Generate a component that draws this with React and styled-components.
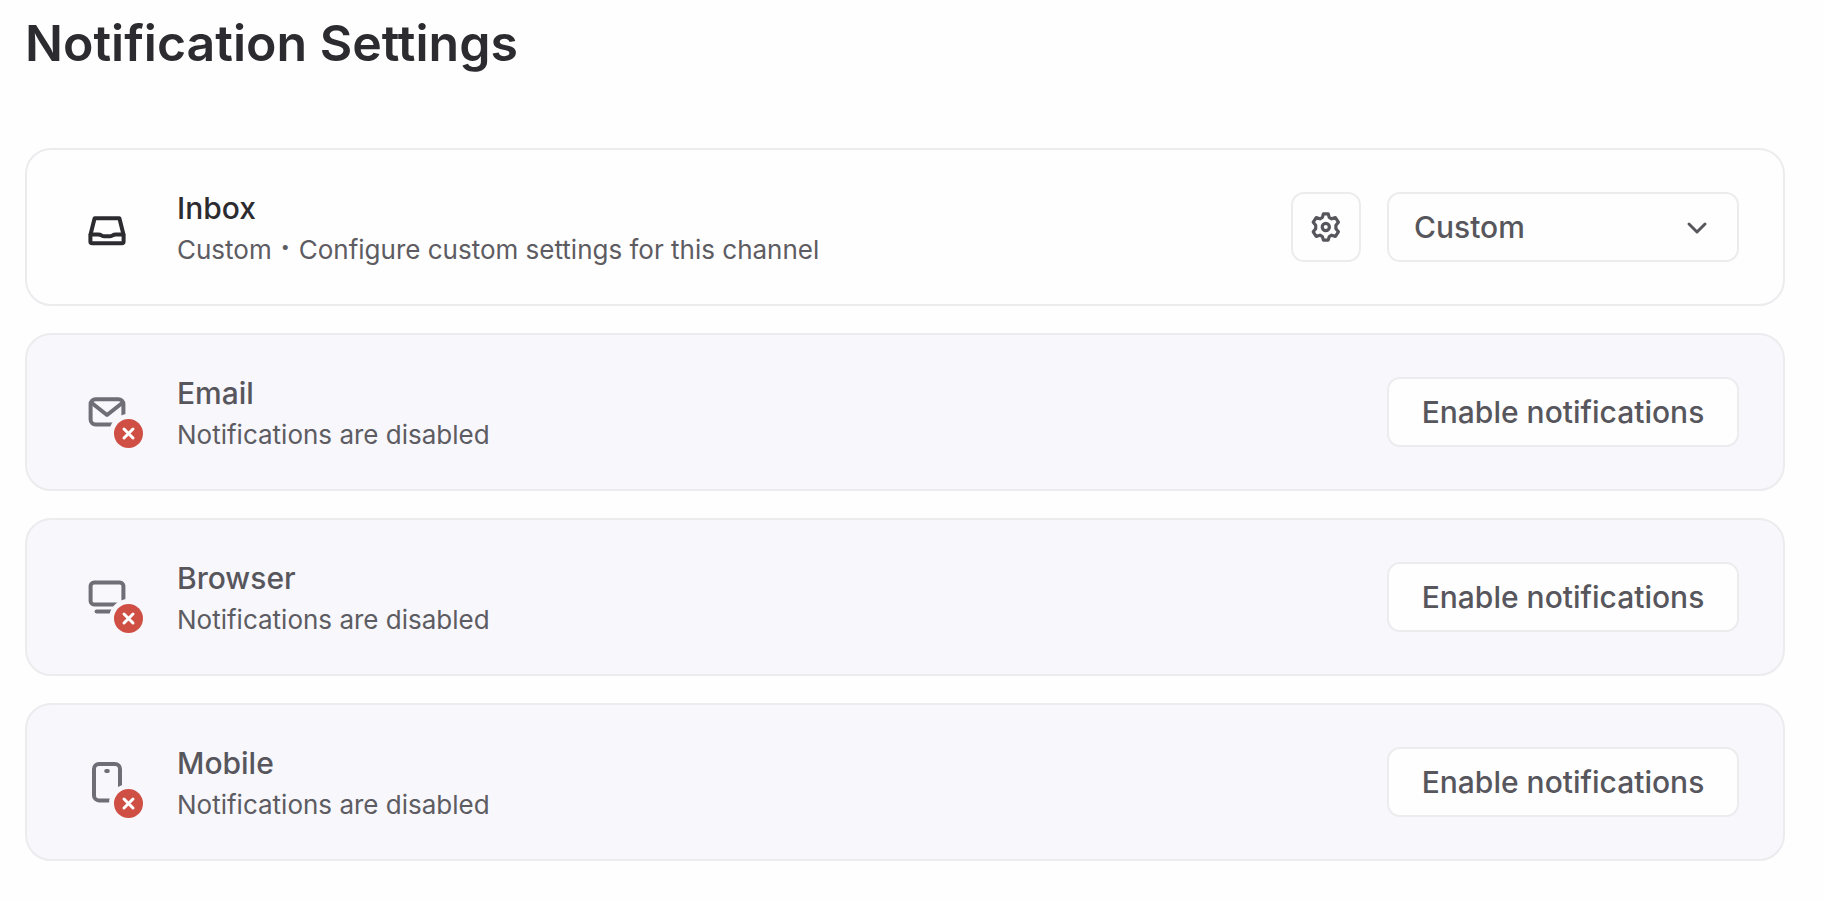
import React, { useState } from 'react'
import styled, { createGlobalStyle, css } from 'styled-components'

const channelList = [
  { key: 'email', title: 'Email' },
  { key: 'browser', title: 'Browser' },
  { key: 'mobile', title: 'Mobile' }
]

const GlobalStyle = createGlobalStyle`
  * {
    box-sizing: border-box;
  }

  body {
    margin: 0;
    background-color: #fefefe;
    font-family: Inter, 'Liberation Sans', sans-serif;
  }
`

const StyledSettings = styled.main`
  padding: 12px 39px 42px 25px;
`

const PageTitle = styled.h1`
  margin: 0 0 74px;
  font-size: 50px;
  line-height: 62px;
  font-weight: 600;
  color: #2c2b30;
`

const ChannelList = styled.ul`
  display: flex;
  flex-direction: column;
  gap: 27px;
  margin: 0;
  padding: 0;
  list-style: none;
`

const Channel = styled.li`
  display: flex;
  align-items: center;
  gap: 26px;
  padding: 35px 44px 35px 58px;
  border: 2px solid #ececef;
  border-radius: 26px;
  background-color: ${(props) => (props.$disabled ? '#f7f7fc' : '#fefefe')};
  color: ${(props) => (props.$disabled ? '#57565c' : '#2c2b30')};
`

const ChannelIcon = styled.div`
  position: relative;
  flex: none;
  width: 44px;
  height: 44px;
  margin-right: 22px;
  color: ${(props) => (props.$disabled ? '#6f6e77' : '#2c2b30')};

  & > svg {
    display: block;
  }
`

const Badge = styled.span`
  position: absolute;
  left: 29px;
  top: 29px;
  width: 29px;
  height: 29px;
  border-radius: 50%;
  background-color: #cf4f45;
  box-shadow: 0 0 0 5px #f7f7fc;

  svg {
    display: block;
  }
`

const ChannelText = styled.div`
  flex: 1;
  min-width: 0;

  h2 {
    margin: 0;
    font-size: 30px;
    line-height: 46px;
    font-weight: 500;
  }

  p {
    margin: 0;
    font-size: 26px;
    line-height: 38px;
    color: #5d5c62;
  }
`

const Dot = styled.span`
  margin: 0 9px;
  font-size: 16px;
  vertical-align: 7px;
  line-height: 1;
`

const control = css`
  height: 70px;
  border: 2px solid #ececef;
  border-radius: 13px;
  background-color: #fefefe;
  color: #57565c;
  font-family: inherit;
  font-size: 30px;
  font-weight: 500;
  cursor: pointer;
`

const Button = styled.button`
  ${control}
  flex: none;
  width: 352px;
  padding: 0;
`

const IconButton = styled.button`
  ${control}
  display: flex;
  align-items: center;
  justify-content: center;
  flex: none;
  width: 70px;
  padding: 0;
`

const SelectBox = styled.div`
  position: relative;
  flex: none;
  width: 352px;

  select {
    ${control}
    display: block;
    appearance: none;
    width: 100%;
    padding: 0 64px 0 25px;
  }

  svg {
    position: absolute;
    right: 30px;
    top: 24px;
    pointer-events: none;
  }
`

const Drawing = ({ children }) => (
  <svg
    width="44"
    height="44"
    viewBox="0 0 44 44"
    fill="none"
    stroke="currentColor"
    strokeWidth="4"
    strokeLinejoin="round"
    strokeLinecap="round"
    aria-hidden="true"
  >
    {children}
  </svg>
)

const drawings = {
  inbox: (
    <Drawing>
      <path d="M9.6 13.3H34.4L38.6 30V36.5Q38.6 38.3 36.8 38.3H7.2Q5.4 38.3 5.4 36.5V30L9.6 13.3Z" />
      <path d="M5.6 29.4H13.2Q15 29.4 16.4 30.4Q17.8 31.3 19.4 31.3H24.6Q26.2 31.3 27.6 30.4Q29 29.4 30.8 29.4H38.4" />
    </Drawing>
  ),
  email: (
    <Drawing>
      <rect x="5.6" y="9.2" width="32.8" height="25.4" rx="5" />
      <path d="M6.8 13L22 25L37.2 13" />
    </Drawing>
  ),
  browser: (
    <Drawing>
      <rect x="5.6" y="7.6" width="32.8" height="21.8" rx="3.5" />
      <path d="M11.6 36.6H27" />
    </Drawing>
  ),
  mobile: (
    <Drawing>
      <rect x="9" y="4" width="26" height="36.4" rx="5" />
      <path d="M21.2 11H22.8" />
    </Drawing>
  )
}

const DisabledBadge = () => (
  <Badge>
    <svg
      width="29"
      height="29"
      viewBox="0 0 29 29"
      stroke="#fff"
      strokeWidth="3"
      strokeLinecap="round"
      aria-hidden="true"
    >
      <path d="M10 10L19 19M19 10L10 19" />
    </svg>
  </Badge>
)

const GearIcon = () => (
  <svg
    width="32"
    height="32"
    viewBox="0 0 32 32"
    fill="none"
    stroke="currentColor"
    strokeWidth="3.2"
    strokeLinejoin="round"
    aria-hidden="true"
  >
    <path d="M13.4 2.9H18.2L19.2 6.4L21.6 7.8L25.4 6.6L28.4 11.2L25.9 14.2V17.8L28.4 20.8L25.4 25.4L21.6 24.2L19.2 25.6L18.2 29.1H13.4L12.4 25.6L10 24.2L6.2 25.4L3.2 20.8L5.7 17.8V14.2L3.2 11.2L6.2 6.6L10 7.8L12.4 6.4Z" />
    <circle cx="15.8" cy="16" r="3.6" />
  </svg>
)

const ChevronIcon = () => (
  <svg
    width="24"
    height="24"
    viewBox="0 0 24 24"
    fill="none"
    stroke="#57565c"
    strokeWidth="3"
    strokeLinejoin="round"
    strokeLinecap="round"
    aria-hidden="true"
  >
    <path d="M4 8L12 16L20 8" />
  </svg>
)

const App = () => {
  const [mode, setMode] = useState('Custom')

  return (
    <StyledSettings>
      <GlobalStyle />
      <PageTitle>Notification Settings</PageTitle>
      <ChannelList>
        <Channel>
          <ChannelIcon>{drawings.inbox}</ChannelIcon>
          <ChannelText>
            <h2>Inbox</h2>
            <p>
              {mode}
              <Dot>•</Dot>
              Configure custom settings for this channel
            </p>
          </ChannelText>
          <IconButton type="button" aria-label="Inbox settings">
            <GearIcon />
          </IconButton>
          <SelectBox>
            <select
              aria-label="Inbox notifications"
              value={mode}
              onChange={(e) => setMode(e.target.value)}
            >
              <option>Custom</option>
            </select>
            <ChevronIcon />
          </SelectBox>
        </Channel>
        {channelList.map((channel) => (
          <Channel key={channel.key} $disabled>
            <ChannelIcon $disabled>
              {drawings[channel.key]}
              <DisabledBadge />
            </ChannelIcon>
            <ChannelText>
              <h2>{channel.title}</h2>
              <p>Notifications are disabled</p>
            </ChannelText>
            <Button type="button">Enable notifications</Button>
          </Channel>
        ))}
      </ChannelList>
    </StyledSettings>
  )
}

export default App
